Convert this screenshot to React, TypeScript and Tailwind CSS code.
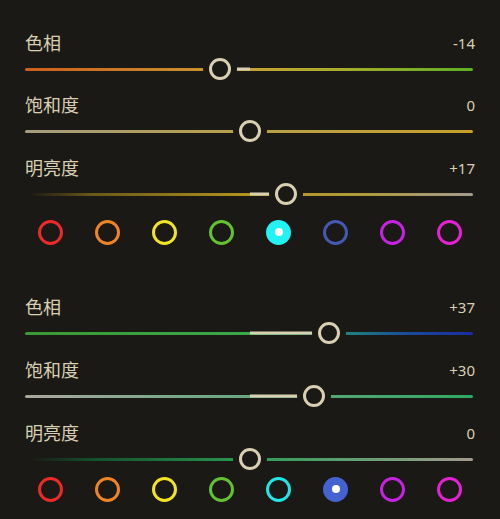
import React from "react";

interface SliderRowProps {
  label: string;
  value: number;
  track: string;
  className?: string;
}

function formatValue(v: number) {
  if (v > 0) return `+${v}`;
  return `${v}`;
}

function SliderRow({ label, value, track, className = "" }: SliderRowProps) {
  // thumb centre relative to track start (track is 448px wide, 0 at 225)
  const center = 225 + value * 2.14;
  const fillLeft = Math.min(225, center);
  const fillWidth = Math.abs(center - 225);

  return (
    <div className={className}>
      {/* Label + value */}
      <div className="flex h-[26px] items-center justify-between">
        <span className="text-[18px] leading-none text-[#d9d0b4]">{label}</span>
        <span className="text-[15px] leading-none text-[#d9d0b4]">{formatValue(value)}</span>
      </div>

      {/* Track */}
      <div className="relative mt-[2px] flex h-[22px] w-[448px] items-center">
        <div className="h-[3px] w-full rounded-full" style={{ background: track }} />
        {value !== 0 && (
          <div
            className="absolute top-1/2 h-[3px] -translate-y-1/2 bg-[#d9d0b4]"
            style={{ left: fillLeft, width: fillWidth }}
          />
        )}
        <div
          className="absolute top-0 h-[22px] w-[22px] -translate-x-1/2 rounded-full border-[3px] border-[#d9d0b4] bg-[#1b1915] shadow-[0_0_0_6px_#1b1915]"
          style={{ left: center }}
        />
      </div>
    </div>
  );
}

interface Swatch {
  color: string;
  selected?: boolean;
}

function SwatchRow({ swatches, className = "" }: { swatches: Swatch[]; className?: string }) {
  return (
    <div className={`-mx-[3px] grid h-[26px] grid-cols-8 items-center justify-items-center ${className}`}>
      {swatches.map((s, i) =>
        s.selected ? (
          <div
            key={i}
            className="flex h-[25px] w-[25px] items-center justify-center rounded-full"
            style={{ backgroundColor: s.color }}
          >
            <div className="h-[8px] w-[8px] rounded-full bg-white" />
          </div>
        ) : (
          <div
            key={i}
            className="h-[25px] w-[25px] rounded-full border-[3px]"
            style={{ borderColor: s.color }}
          />
        )
      )}
    </div>
  );
}

const baseColors = ["#ec2a2a", "#f08424", "#f2e424", "#62c232", "#22e6e6", "#4458b4", "#c622e2", "#e422d4"];

export default function App() {
  const swatches1: Swatch[] = baseColors.map((c, i) =>
    i === 4 ? { color: "#22f2f2", selected: true } : { color: c }
  );
  const swatches2: Swatch[] = baseColors.map((c, i) =>
    i === 5 ? { color: "#4462d2", selected: true } : { color: c }
  );

  return (
    <div
      className="h-[519px] w-[500px] overflow-hidden bg-[#1b1915] px-[25px] pt-[30px]"
      style={{ fontFamily: '"Noto Sans", "Noto Sans CJK SC", sans-serif' }}
    >
      {/* Group 1 */}
      <SliderRow
        label="色相"
        value={-14}
        track="linear-gradient(90deg, #cf5e1c 0%, #c9852a 30%, #c6a232 50%, #a8ac2c 70%, #5cb024 100%)"
      />
      <SliderRow
        label="饱和度"
        value={0}
        track="linear-gradient(90deg, #a49c80 0%, #b4a050 40%, #c6a02a 100%)"
        className="mt-[12px]"
      />
      <SliderRow
        label="明亮度"
        value={17}
        track="linear-gradient(90deg, #1b1915 1%, #6a5818 15%, #b4941e 50%, #b09a3a 75%, #a49a8c 100%)"
        className="mt-[13px]"
      />
      <SwatchRow swatches={swatches1} className="mt-[14px]" />

      {/* Group 2 */}
      <SliderRow
        label="色相"
        value={37}
        track="linear-gradient(90deg, #3a9a34 0%, #3ca848 50%, #208a7a 70%, #1a4c9a 85%, #1a2c9e 100%)"
        className="mt-[49px]"
      />
      <SliderRow
        label="饱和度"
        value={30}
        track="linear-gradient(90deg, #aaa89e 0%, #78a888 35%, #30a862 100%)"
        className="mt-[13px]"
      />
      <SliderRow
        label="明亮度"
        value={0}
        track="linear-gradient(90deg, #1b1915 1%, #12502c 15%, #2a9c52 50%, #58a070 70%, #a49a8c 100%)"
        className="mt-[13px]"
      />
      <SwatchRow swatches={swatches2} className="mt-[6px]" />
    </div>
  );
}
